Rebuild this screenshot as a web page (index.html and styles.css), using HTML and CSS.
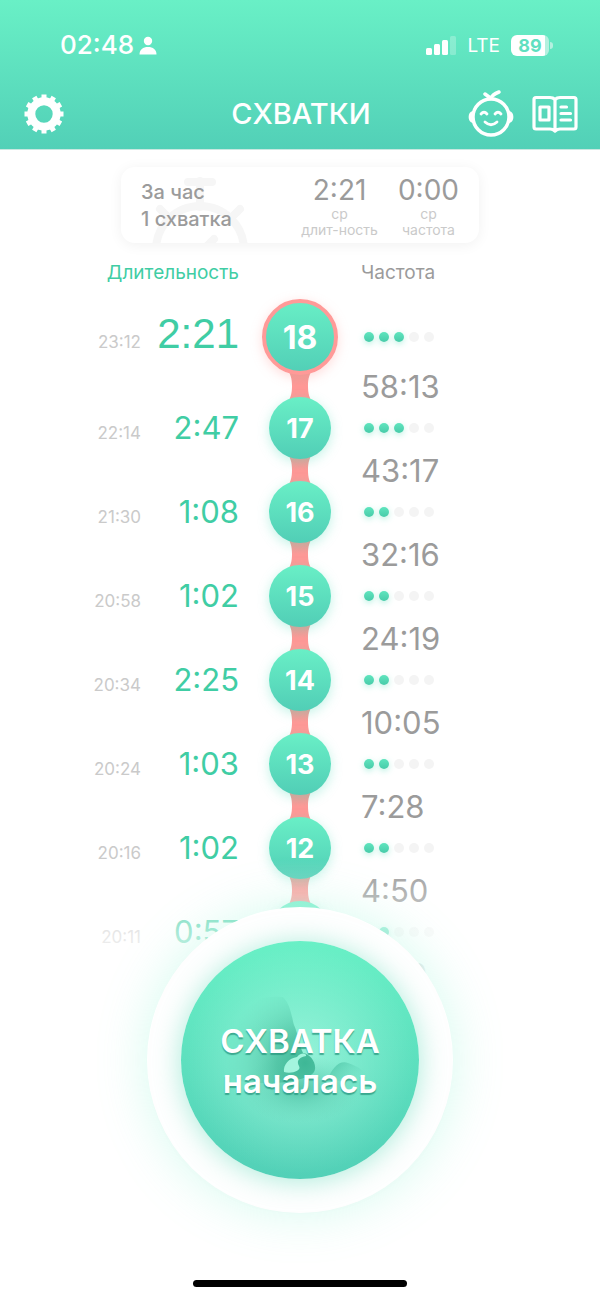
FILE: index.html
```html
<!DOCTYPE html>
<html lang="ru">
<head>
<meta charset="utf-8">
<meta name="viewport" content="width=device-width, initial-scale=1">
<title>Схватки</title>
<link rel="stylesheet" href="styles.css">
</head>
<body>
<svg class="defs" aria-hidden="true">
  <defs>
    <linearGradient id="link-fill" x1="0" y1="0" x2="0" y2="1">
      <stop offset="0" stop-color="#e09c95"/><stop offset=".5" stop-color="#ff9896"/><stop offset="1" stop-color="#ff9896"/>
    </linearGradient>
    <symbol id="link" viewBox="0 0 36 38">
      <path d="M3 0C9 6 10 12 10 19S9 32 3 38H33C27 32 26 26 26 19S27 6 33 0Z" fill="url(#link-fill)"/>
    </symbol>
  </defs>
</svg>
<div class="app">
  <header class="header">
    <div class="status">
      <div class="status-group">
        <span class="clock">02:48</span>
        <svg width="18" height="19" viewBox="0 0 18 19" fill="#fff" aria-hidden="true"><circle cx="9" cy="5" r="4.200"/><path d="M.5 18.500C.5 13.500 4 11 9 11s8.500 2.500 8.500 7.500Z"/></svg>
      </div>
      <div class="status-group status-right">
        <svg width="30" height="19" viewBox="0 0 30 19" fill="#fff" aria-hidden="true"><rect y="12" width="6" height="7" rx="1.500"/><rect x="8" y="8" width="6" height="11" rx="1.500"/><rect x="16" y="4" width="6" height="15" rx="1.500"/><rect x="24" width="6" height="19" rx="1.500" opacity=".25"/></svg>
        <span class="network">LTE</span>
        <span class="battery">89</span>
      </div>
    </div>
    <nav class="nav">
      <div class="nav-side">
        <button class="icon-button" type="button" aria-label="Настройки">
          <svg width="40" height="40" viewBox="-20 -20 40 40" aria-hidden="true">
            <circle r="12.700" fill="none" stroke="#fff" stroke-width="8"/>
            <g stroke="#fff" stroke-width="5" stroke-linejoin="round">
              <path d="M0-15V-19.500M0 15V19.500M-15 0H-19.500M15 0H19.500"/>
              <path d="M0-15V-19.500M0 15V19.500M-15 0H-19.500M15 0H19.500" transform="rotate(30)"/>
              <path d="M0-15V-19.500M0 15V19.500M-15 0H-19.500M15 0H19.500" transform="rotate(60)"/>
            </g>
          </svg>
        </button>
      </div>
      <h1 class="title">СХВАТКИ</h1>
      <div class="nav-side nav-end">
        <button class="icon-button" type="button" aria-label="Ребёнок">
          <svg width="46" height="48" viewBox="0 0 46 48" fill="none" stroke="#fff" stroke-width="3.500" stroke-linecap="round" stroke-linejoin="round" aria-hidden="true">
            <circle cx="23" cy="27" r="18"/>
            <path d="M5 22C.5 23 .5 31 5 32ZM41 22C45.500 23 45.500 31 41 32Z" fill="#fff" stroke-width="2"/>
            <path d="M17 4L23 8.500C24 5 27 3.500 31 2"/>
            <path d="M13 24Q16 20.500 19 24M27 24Q30 20.500 33 24M17 32Q23 37.500 29 32" stroke-width="2.800"/>
          </svg>
        </button>
        <button class="icon-button" type="button" aria-label="Журнал">
          <svg width="46" height="38" viewBox="0 0 46 38" fill="none" stroke="#fff" stroke-width="3.200" stroke-linecap="round" stroke-linejoin="round" aria-hidden="true">
            <path d="M23 4.500Q21 2.500 18 2.500H4Q2 2.500 2 4.500V32Q2 34 4 34H18Q21 34 23 36Q25 34 28 34H42Q44 34 44 32V4.500Q44 2.500 42 2.500H28Q25 2.500 23 4.500V35"/>
            <path d="M8 12H17V25H8ZM29 12H34.500M29 18.500H38.500M29 25H38.500"/>
          </svg>
        </button>
      </div>
    </nav>
  </header>

  <main class="main">
    <section class="summary">
      <svg class="stopwatch" width="100" height="66" viewBox="0 0 100 66" fill="none" stroke="#f6f6f6" stroke-width="8" aria-hidden="true">
        <circle cx="50" cy="73" r="44"/><path d="M50 4V30M10 32L16 38M84 38L90 32M52 74L64 62M38 5H62" stroke-linecap="round"/>
      </svg>
      <p class="summary-text">За час<br>1 схватка</p>
      <div class="stat"><b class="stat-value">2:21</b><span>ср<br>длит-ность</span></div>
      <div class="stat"><b class="stat-value">0:00</b><span>ср<br>частота</span></div>
    </section>

    <div class="heads">
      <h2 class="head head-duration">Длительность</h2>
      <h2 class="head head-interval">Частота</h2>
    </div>

    <ol class="timeline">
      <li class="entry entry-current">
        <div class="left"><time class="time">23:12</time><span class="duration">2:21</span></div>
        <button class="node" type="button">18</button>
        <div class="dots" role="img" aria-label="3 из 5"><i class="on"></i><i class="on"></i><i class="on"></i><i></i><i></i></div>
        <svg class="link" aria-hidden="true"><use href="#link"/></svg>
        <span class="interval">58:13</span>
      </li>
      <li class="entry">
        <div class="left"><time class="time">22:14</time><span class="duration">2:47</span></div>
        <button class="node" type="button">17</button>
        <div class="dots" role="img" aria-label="3 из 5"><i class="on"></i><i class="on"></i><i class="on"></i><i></i><i></i></div>
        <svg class="link" aria-hidden="true"><use href="#link"/></svg>
        <span class="interval">43:17</span>
      </li>
      <li class="entry">
        <div class="left"><time class="time">21:30</time><span class="duration">1:08</span></div>
        <button class="node" type="button">16</button>
        <div class="dots" role="img" aria-label="2 из 5"><i class="on"></i><i class="on"></i><i></i><i></i><i></i></div>
        <svg class="link" aria-hidden="true"><use href="#link"/></svg>
        <span class="interval">32:16</span>
      </li>
      <li class="entry">
        <div class="left"><time class="time">20:58</time><span class="duration">1:02</span></div>
        <button class="node" type="button">15</button>
        <div class="dots" role="img" aria-label="2 из 5"><i class="on"></i><i class="on"></i><i></i><i></i><i></i></div>
        <svg class="link" aria-hidden="true"><use href="#link"/></svg>
        <span class="interval">24:19</span>
      </li>
      <li class="entry">
        <div class="left"><time class="time">20:34</time><span class="duration">2:25</span></div>
        <button class="node" type="button">14</button>
        <div class="dots" role="img" aria-label="2 из 5"><i class="on"></i><i class="on"></i><i></i><i></i><i></i></div>
        <svg class="link" aria-hidden="true"><use href="#link"/></svg>
        <span class="interval">10:05</span>
      </li>
      <li class="entry">
        <div class="left"><time class="time">20:24</time><span class="duration">1:03</span></div>
        <button class="node" type="button">13</button>
        <div class="dots" role="img" aria-label="2 из 5"><i class="on"></i><i class="on"></i><i></i><i></i><i></i></div>
        <svg class="link" aria-hidden="true"><use href="#link"/></svg>
        <span class="interval">7:28</span>
      </li>
      <li class="entry">
        <div class="left"><time class="time">20:16</time><span class="duration">1:02</span></div>
        <button class="node" type="button">12</button>
        <div class="dots" role="img" aria-label="2 из 5"><i class="on"></i><i class="on"></i><i></i><i></i><i></i></div>
        <svg class="link" aria-hidden="true"><use href="#link"/></svg>
        <span class="interval">4:50</span>
      </li>
      <li class="entry">
        <div class="left"><time class="time">20:11</time><span class="duration">0:57</span></div>
        <button class="node" type="button">11</button>
        <div class="dots" role="img" aria-label="2 из 5"><i class="on"></i><i class="on"></i><i></i><i></i><i></i></div>
        <svg class="link" aria-hidden="true"><use href="#link"/></svg>
        <span class="interval">5:20</span>
      </li>
    </ol>
  </main>

  <footer class="footer">
    <div class="disc">
      <button class="start" type="button">
        <svg class="baby" viewBox="0 0 238 238" aria-hidden="true">
          <defs>
            <radialGradient id="head" gradientUnits="userSpaceOnUse" cx="124" cy="122" r="80">
              <stop offset="0" stop-color="#3eb796"/><stop offset=".35" stop-color="#48bd9d" stop-opacity=".8"/><stop offset="1" stop-color="#62d8b8" stop-opacity="0"/>
            </radialGradient>
            <linearGradient id="arm" x1="0" y1="0" x2="1" y2=".5">
              <stop offset="0" stop-color="#4fc5a6"/><stop offset="1" stop-color="#6bdcc0" stop-opacity="0"/>
            </linearGradient>
            <radialGradient id="body">
              <stop offset="0" stop-color="#47bc9f" stop-opacity=".8"/><stop offset="1" stop-color="#64d4b8" stop-opacity="0"/>
            </radialGradient>
          </defs>
          <ellipse cx="119" cy="148" rx="62" ry="34" fill="url(#body)"/>
          <path d="M102 56C110 64 111 78 113 84C117 92 118 104 122 112C129 113 135 121 134 128C133 136 120 138 106 141C80 144 50 142 42 130V80C60 60 80 54 102 56Z" fill="url(#head)"/>
          <path d="M103 131C102 124 108 117 116 116C121 110 126 113 125 115C116 117 116 121 118 125C121 130 110 133 103 131Z" fill="#a4f5de"/>
          <path d="M146 140C151 127 158 119 167 122C178 126 186 131 190 140Z" fill="url(#arm)"/>
        </svg>
        <span class="start-text"><span>СХВАТКА</span><span>началась</span></span>
      </button>
    </div>
    <div class="home"></div>
  </footer>
</div>
</body>
</html>
```
FILE: styles.css
```css
* { box-sizing: border-box; }

body {
  margin: 0;
  background: #fff;
  color: #9b9b9b;
  font-family: Inter, "Liberation Sans", sans-serif;
}

button {
  border: 0;
  padding: 0;
  background: none;
  color: inherit;
  font: inherit;
  cursor: pointer;
}

h1, h2, p, ol { margin: 0; padding: 0; }
svg { display: block; flex: none; }
.defs { position: absolute; width: 0; height: 0; }

.app {
  position: relative;
  min-height: 100vh;
  overflow: hidden;
}

/* Header */
.header {
  color: #fff;
  background: linear-gradient(#69f0c6, #52d0b7);
  border-bottom: 1px solid #c9e8e1;
}

.status {
  display: flex;
  justify-content: space-between;
  align-items: center;
  height: 78px;
  padding: 12px 48px 0 60px;
}

.status-group { display: flex; align-items: center; gap: 5px; }
.status-right { gap: 11px; }
.clock { font-size: 26px; font-weight: 500; line-height: 30px; }
.network { font-size: 19px; font-weight: 400; }

.battery {
  position: relative;
  width: 38px;
  margin-right: 3px;
  border-radius: 6px;
  background: linear-gradient(90deg, #fff 34px, #b4f0df 34px);
  color: #5fdfc0;
  font-size: 18px;
  font-weight: 700;
  line-height: 21px;
  text-align: center;
}

.battery::after {
  content: "";
  position: absolute;
  top: 7px;
  right: -4px;
  width: 3px;
  height: 7px;
  border-radius: 0 3px 3px 0;
  background: #b4f0df;
}

.nav {
  display: grid;
  grid-template-columns: 1fr auto 1fr;
  align-items: center;
  height: 71px;
  padding: 0 22px 0 24px;
}

.nav-side { display: flex; align-items: center; gap: 18px; }
.nav-end { justify-content: flex-end; }
.title { font-size: 29px; font-weight: 500; }

/* Hourly summary */
.main { padding-top: 17px; }

.summary {
  position: relative;
  display: flex;
  align-items: center;
  gap: 20px;
  width: 358px;
  max-width: 100%;
  height: 76px;
  margin: 0 auto;
  padding: 2px 20px 0;
  border-radius: 14px;
  box-shadow: 0 2px 14px rgba(0, 0, 0, .06);
}

.stopwatch { position: absolute; left: 29px; bottom: 0; }

.summary-text {
  position: relative;
  flex: 1;
  font-size: 20px;
  font-weight: 500;
  line-height: 27px;
}

.stat {
  color: #cacaca;
  font-size: 14px;
  line-height: 16px;
  text-align: center;
}

.stat span { display: block; }

.stat-value {
  display: block;
  color: #9b9b9b;
  font-size: 28px;
  font-weight: 400;
  line-height: 32px;
}

/* Timeline */
.heads, .entry {
  display: grid;
  grid-template-columns: 1fr 76px 1fr;
  column-gap: 23px;
}

.heads { margin-top: 18px; }
.head { font-size: 19px; font-weight: 400; line-height: 24px; }
.head-duration { color: #40cda4; text-align: right; }
.head-interval { grid-column: 3; }

.timeline { padding-top: 14px; list-style: none; }

.entry {
  grid-template-rows: auto 22px;
  align-items: center;
}

.left {
  display: flex;
  justify-content: flex-end;
  align-items: baseline;
}

.time { color: #cacaca; font-size: 17px; }

.duration {
  width: 98px;
  color: #40cda4;
  font-size: 31px;
  line-height: 40px;
  text-align: right;
}

.node {
  position: relative;
  z-index: 1;
  justify-self: center;
  width: 62px;
  height: 62px;
  border-radius: 50%;
  background: linear-gradient(#69efc6, #51ceb6);
  box-shadow: 0 3px 12px rgba(84, 222, 186, .35);
  color: #fff;
  font-size: 27px;
  font-weight: 700;
}

.entry-current .left { padding-bottom: 6px; }

.entry-current .duration {
  font-family: "Liberation Sans", sans-serif;
  font-size: 42px;
}

.entry-current .node {
  width: 76px;
  height: 76px;
  border: 4px solid #ff9a98;
  background-origin: border-box;
  box-shadow: 0 3px 12px rgba(255, 154, 152, .35);
  font-size: 32px;
}

.dots { display: flex; gap: 5px; padding-left: 3px; }

.dots i {
  width: 10px;
  height: 10px;
  border-radius: 50%;
  background: #f4f4f4;
}

.dots .on {
  background: linear-gradient(#5fe5be, #48cba9);
  box-shadow: 0 2px 6px rgba(84, 222, 186, .4);
}

.link {
  grid-column: 2;
  justify-self: center;
  width: 36px;
  height: 38px;
  margin: -8px 0;
}

.interval { padding-top: 2px; font-size: 31px; line-height: 22px; }

/* Floating start button */
.footer {
  position: absolute;
  inset: auto 0 0;
  z-index: 2;
  display: flex;
  flex-direction: column;
  align-items: center;
  gap: 67px;
  padding: 47px 0 13px;
  background: linear-gradient(rgba(255, 255, 255, 0), #fff 130px);
}

.disc {
  padding: 34px;
  border-radius: 50%;
  background: #fff;
  box-shadow: 0 0 50px rgba(105, 240, 198, .28);
}

.start {
  position: relative;
  display: grid;
  place-items: center;
  width: 238px;
  height: 238px;
  border-radius: 50%;
  background:
    radial-gradient(circle, rgba(190, 255, 236, .6), rgba(190, 255, 236, 0) 68%),
    linear-gradient(#69f0c6, #52d0b7);
  box-shadow: 0 2px 28px rgba(84, 215, 180, .5);
}

.baby { grid-area: 1 / 1; width: 100%; height: 100%; }

.start-text {
  grid-area: 1 / 1;
  display: grid;
  padding-top: 2px;
  color: #fff;
  font-size: 33px;
  font-weight: 600;
  line-height: 40px;
  text-shadow: 0 2px 1px rgba(40, 150, 125, .75);
}

.home {
  width: 214px;
  height: 7px;
  border-radius: 4px;
  background: #000;
}
```
